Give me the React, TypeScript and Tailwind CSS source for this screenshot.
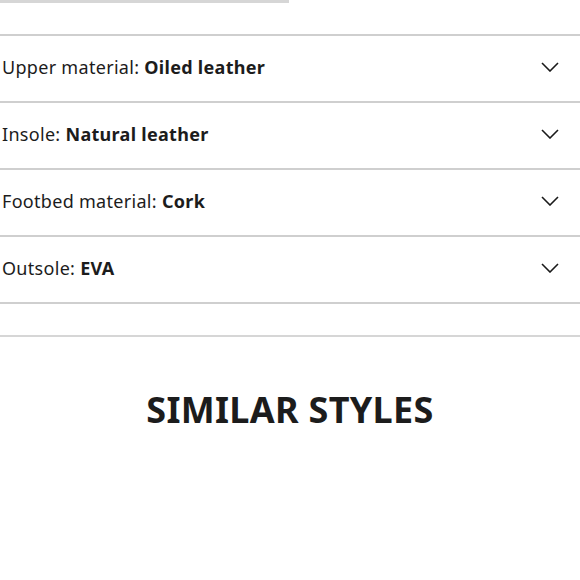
import React from "react";

const ROWS = [
  { label: "Upper material", value: "Oiled leather" },
  { label: "Insole", value: "Natural leather" },
  { label: "Footbed material", value: "Cork" },
  { label: "Outsole", value: "EVA" },
];

const Chevron = () => (
  <svg width="18" height="10" viewBox="0 0 18 10" fill="none" className="shrink-0">
    <path d="M1 1l8 8 8-8" stroke="#1a1a1a" strokeWidth="1.6" />
  </svg>
);

export default function App() {
  return (
    <div
      className="w-[580px] h-[580px] bg-white text-[#1c1c1c] overflow-hidden"
      style={{ fontFamily: '"Noto Sans", "Open Sans", sans-serif' }}
    >
      {/* progress-like strip */}
      <div className="w-[289px] h-[3px] bg-[#d6d6d6]" />

      <div className="mt-[31px] border-t-2 border-[#cfcfcf]">
        {ROWS.map((row) => (
          <div
            key={row.label}
            className="h-[67px] flex items-center justify-between pl-[2px] pr-[21px] pb-[4px] border-b-2 border-[#cfcfcf]"
          >
            <span className="text-[18px] leading-none tracking-[0.3px]">
              {row.label}: <b className="font-bold">{row.value}</b>
            </span>
            <Chevron />
          </div>
        ))}
        <div className="h-[33px] border-b-2 border-[#d6d6d6]" />
      </div>

      <h2 className="mt-[55px] text-center text-[36px] font-bold leading-none tracking-[0.3px]">
        SIMILAR STYLES
      </h2>
    </div>
  );
}
